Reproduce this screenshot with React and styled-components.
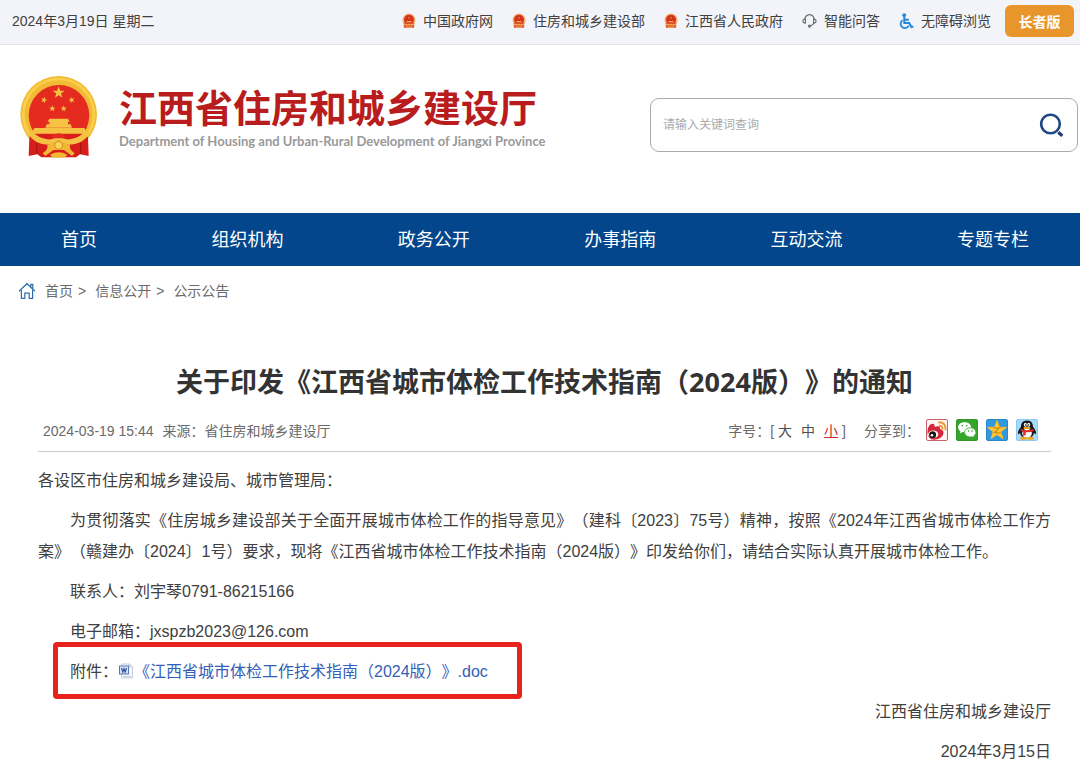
import React from "react";
import styled, { createGlobalStyle, ThemeProvider } from "styled-components";

const theme = {
  font: '"Liberation Sans", "Noto Sans CJK SC", sans-serif',
  colors: {
    blue: "#03468c",
    red: "#b81c1d",
    orange: "#e8962c",
    link: "#3460b8",
    mark: "#e8231d",
  },
  text: {
    primary: "#404040",
    muted: "#6a6a6a",
  },
};

const GlobalStyle = createGlobalStyle`
  * {
    box-sizing: border-box;
  }

  body {
    margin: 0;
    background: #fff;
    color: ${theme.text.primary};
    font-family: ${theme.font};
    text-spacing-trim: space-all; /* keep brackets full width */
  }

  a {
    color: inherit;
    text-decoration: none;
  }

  button,
  input {
    font-family: inherit;
  }
`;

const TopBar = styled.div`
  display: flex;
  align-items: center;
  justify-content: space-between;
  min-height: 45px;
  padding: 0 6px 2px 12px;
  background: #f3f4f9;
  border-bottom: 1px solid #e2e3e6;
  font-size: 14px;
  line-height: 20px;
`;

const TopLinks = styled.div`
  display: flex;
  align-items: center;
  gap: 19px;
`;

const TopLink = styled.a`
  display: flex;
  align-items: center;
  gap: 7px;
`;

const ElderButton = styled.button`
  width: 69px;
  height: 32px;
  margin-left: -5px;
  padding: 0;
  border: 0;
  border-radius: 6px;
  background: ${({ theme }) => theme.colors.orange};
  color: #fff;
  font-size: 14px;
  font-weight: 700;
`;

const Header = styled.header`
  display: flex;
  align-items: center;
  justify-content: space-between;
  padding: 31px 2px 55px 20px;
`;

const Brand = styled.a`
  display: flex;
  align-items: center;
  gap: 21px;
`;

const BrandName = styled.h1`
  margin: 0;
  color: ${({ theme }) => theme.colors.red};
  font-size: 38px;
  font-weight: 700;
  line-height: 48px;
`;

const BrandEnglish = styled.p`
  margin: 0;
  color: #999;
  font-family: Lato, sans-serif;
  font-size: 13px;
  font-weight: 700;
  line-height: 16px;
`;

const SearchForm = styled.form`
  display: flex;
  align-items: center;
  width: 428px;
  height: 54px;
  margin-top: 16px;
  padding: 0 12px;
  border: 1px solid #aaa;
  border-radius: 9px;
`;

const SearchInput = styled.input`
  flex: 1;
  min-width: 0;
  padding: 0;
  border: 0;
  outline: 0;
  background: none;
  font-size: 12px;

  &::placeholder {
    color: #aaa;
  }
`;

const IconButton = styled.button`
  display: flex;
  padding: 0;
  border: 0;
  background: none;
`;

const Nav = styled.nav`
  display: flex;
  align-items: center;
  justify-content: space-between;
  padding: 2px 51px 0 61px;
  background: ${({ theme }) => theme.colors.blue};
  color: #fff;
  font-size: 18px;
  line-height: 51px;
`;

const Crumbs = styled.nav`
  display: flex;
  align-items: center;
  gap: 9px;
  height: 50px;
  padding: 0 18px;
  color: ${({ theme }) => theme.text.muted};
  font-size: 14px;
  line-height: 20px;
`;

const Crumb = styled.span`
  display: flex;
  align-items: baseline;
  gap: 5px;
`;

const Article = styled.article`
  padding: 48px 29px 0 38px;
`;

const ArticleTitle = styled.h2`
  margin: 0;
  color: #333;
  font-family: "Noto Sans", "Noto Sans CJK SC", sans-serif;
  font-size: 27px;
  line-height: 36px;
  text-align: center;
`;

const Meta = styled.div`
  display: flex;
  align-items: center;
  justify-content: space-between;
  height: 52px;
  padding: 8px 13px 0 5px;
  border-bottom: 1px solid #ccc;
  color: ${({ theme }) => theme.text.muted};
  font-size: 14px;
`;

const MetaGroup = styled.div`
  display: flex;
  align-items: baseline;
  gap: ${({ $gap }) => $gap || "9px"};
`;

const SizeButton = styled.button`
  padding: 0;
  border: 0;
  background: none;
  color: ${({ $active }) => ($active ? "#d0262b" : "#505050")};
  font-size: 14px;
  text-decoration: ${({ $active }) => ($active ? "underline" : "none")};
`;

const Tools = styled.div`
  display: flex;
  align-items: center;
  gap: 18px;
`;

const Share = styled.div`
  display: flex;
  align-items: center;
  gap: 6px;
`;

const ShareLink = styled.a`
  display: flex;
`;

const ShareList = styled.div`
  display: flex;
  gap: 8px;
`;

const Content = styled.div`
  display: flex;
  flex-direction: column;
  gap: 9px;
  padding: 13px 0 7px;
  font-size: 16px;
  line-height: 31px;
`;

const Paragraph = styled.p`
  position: relative;
  margin: 0;
  text-indent: ${({ $indent }) => ($indent ? "2em" : "0")};
  text-align: ${({ $align }) => $align || "justify"};
`;

const FileLink = styled.a`
  color: ${({ theme }) => theme.colors.link};
`;

/* Red frame drawn over the attachment line */
const Highlight = styled.span`
  position: absolute;
  top: -14px;
  left: 15px;
  width: 469px;
  height: 57px;
  border: 5px solid ${({ theme }) => theme.colors.mark};
  border-radius: 4px;
  pointer-events: none;
`;

const STAR = "M0-10 2.4-3.2 9.5-3.1 3.8 1.2 5.9 8.1 0 4-5.9 8.1-3.8 1.2-9.5-3.1-2.4-3.2Z";

function Emblem() {
  return (
    <svg width="78" height="82" viewBox="0 0 234 246" aria-hidden="true">
      <circle cx="116" cy="115" r="115" fill="#f3bb35" />
      <circle cx="116" cy="115" r="106" fill="none" stroke="#f9cf4b" strokeWidth="8" />
      <circle cx="117" cy="118" r="91" fill="#e52a20" />
      <g fill="#f6c244">
        <path d={STAR} transform="translate(116 50) scale(1.9)" />
        <path d={STAR} transform="translate(72 72) rotate(18)" />
        <path d={STAR} transform="translate(155 72) rotate(-18)" />
        <path d={STAR} transform="translate(97 98)" />
        <path d={STAR} transform="translate(131 98)" />
        <path d="M88 128h56l5 9h-5v8h8l4 10H76l4-10h8v-8h-5Z" />
        <path d="M43 156h150l9 17H34Z" />
      </g>
      <path d="M34 174q-4 4-6 10l-2 56 26-5 12 9h104l12-9 26 5-2-56-10-10Z" fill="#d91d1b" />
      <path d="M22 172q22 34 62 34 20 0 32-14 12 14 32 14 40 0 62-34l-14-6q-18 20-46 24-22 2-34-12-12 14-34 12-28-4-46-24Z" fill="#f5c343" />
      <path d="M94 180q22-16 44 0l-8 7h-28Z" fill="#e52a20" />
      <path d="M82 206q4 14-14 26l8 8 24-18h32l24 18 8-8q-18-12-14-26l-20-4-14-10-14 10Z" fill="#f3b735" />
      <circle cx="116" cy="208" r="12" fill="#f9d45b" stroke="#d88a20" strokeWidth="3" />
      <path d="M90 236q26-14 52 0l-8 9H98Z" fill="#f3b735" />
      <path d="M50 200v34M182 200v34" stroke="#a91415" strokeWidth="4" />
    </svg>
  );
}

function SmallEmblem() {
  return (
    <svg width="14" height="16" viewBox="0 0 14 16" aria-hidden="true">
      <circle cx="7" cy="7" r="6.5" fill="#f4b172" />
      <circle cx="7" cy="6.8" r="5" fill="#d4341f" />
      <path d="M1.600 9.800h10.800l-.4 5H2Z" fill="#de5228" />
      <path d="M2 10.400q2.500 1.600 5 .4 2.500 1.200 5-.4v1.400q-2.500 1.200-5 .2-2.500 1-5-.2Z" fill="#f6b35a" />
      <path d="M4.500 8h5v1.300h-5ZM4 13.500h6v1H4ZM6.500 4h1v1.500h-1Z" fill="#f3a550" />
    </svg>
  );
}

function HeadsetIcon() {
  return (
    <svg width="15" height="16" viewBox="0 0 16 16" fill="none" stroke="#666" strokeWidth="1.200" strokeLinecap="round" aria-hidden="true">
      <path d="M3 6.200a5 5 0 0 1 10 0" />
      <path d="M3.600 5.800h-1Q1 6.200 1 8t1.600 2.200h1ZM12.400 5.800h1Q15 6.200 15 8t-1.600 2.200h-1Z" />
      <path d="M12.600 10.200q-.8 2.400-3.600 3" />
      <circle cx="8" cy="13.400" r="1.100" />
    </svg>
  );
}

function WheelchairIcon() {
  return (
    <svg width="15" height="17" viewBox="0 0 15 17" fill="none" stroke="#2387dc" aria-hidden="true">
      <circle cx="5.200" cy="2.200" r="1.900" fill="#2387dc" stroke="none" />
      <path d="M5.300 4v6h5l2.200 4.200 1.800-.9M5.500 6.800h4.300" strokeWidth="2" />
      <path d="M3.600 7.200a4.300 4.300 0 1 0 6.300 5.300" strokeWidth="1.800" />
    </svg>
  );
}

function SearchIcon() {
  return (
    <svg width="26" height="26" viewBox="0 0 26 26" fill="none" stroke="#1c3f75" aria-hidden="true">
      <circle cx="11.500" cy="12" r="9.300" stroke="#1d4a86" strokeWidth="2.600" />
      <path d="M19.300 20.300l4 3.600" strokeWidth="3.200" />
    </svg>
  );
}

function HomeIcon() {
  return (
    <svg width="18" height="18" viewBox="0 0 18 18" fill="none" stroke="#2f6ea8" strokeWidth="1.200" aria-hidden="true">
      <path d="M1 9.300 9 1.700l8 7.600M12.800 5V2.400h2v4.500" />
      <path d="M3.400 8v8.400h3.400v-5.200h4.400v5.200h3.400V8" />
    </svg>
  );
}

function WeiboIcon() {
  return (
    <svg width="22" height="22" viewBox="0 0 22 22" aria-hidden="true">
      <rect x=".5" y=".5" width="21" height="21" rx="1.500" fill="#fff5f2" stroke="#c6646d" />
      <path d="M1.500 12.500C1.500 8 4.500 4.200 7.200 4.800q1.800.6 1.300 3 5-1.600 5.500.6.200 1-.3 1.700 4 .9 3.800 4C17.200 18.500 12 20.800 8 20.800c-4 0-7-3.800-6.500-8.300Z" fill="#d5273a" />
      <ellipse cx="7.200" cy="15.300" rx="5" ry="3.900" fill="#fff" />
      <circle cx="6.600" cy="15.800" r="3.500" fill="#151313" />
      <circle cx="6" cy="16.300" r="1.300" fill="#fff" />
      <path d="M13 6.800q3.800-.2 3.600 3.800M12.400 3.200q7.600-.4 7.200 8" fill="none" stroke="#eb9837" strokeWidth="1.900" />
    </svg>
  );
}

function WechatIcon() {
  return (
    <svg width="22" height="22" viewBox="0 0 22 22" aria-hidden="true">
      <rect x=".5" y=".5" width="21" height="21" rx="1.500" fill="#35a52c" stroke="#319328" />
      <path d="M8.600 3.300c-3.700 0-6.500 2.200-6.500 5 0 1.700.9 3 2.400 3.900l-.7 2.200 2.700-1.400q1 .3 2.100.3c3.700 0 6.500-2.200 6.500-5s-2.800-5-6.500-5Z" fill="#fff" />
      <path d="M14.200 8.800c-3.200 0-5.600 2-5.600 4.600s2.400 4.600 5.600 4.600q1 0 1.900-.3l2.200 1.300-.6-2.100c1.400-.9 2.200-2.100 2.200-3.500 0-2.600-2.500-4.600-5.700-4.600Z" fill="#fff" stroke="#35a52c" strokeWidth=".8" />
      <path d="M5.600 6.600h1.500M9.900 6.600h1.500M11.800 12h1.300M15.400 12h1.300" stroke="#35a52c" strokeWidth="1.300" />
    </svg>
  );
}

function QzoneIcon() {
  return (
    <svg width="22" height="22" viewBox="0 0 22 22" aria-hidden="true">
      <rect x=".5" y=".5" width="21" height="21" rx="1.500" fill="#3399df" stroke="#2a88c9" />
      <path d={STAR} transform="translate(11 11.500)" fill="#fccb32" stroke="#f9b928" strokeWidth="1" strokeLinejoin="round" />
      <path d="M7.500 8.800h6l-5 4.700q3 .8 6.300.2" fill="none" stroke="#d58b17" strokeWidth="1.300" />
    </svg>
  );
}

function QQIcon() {
  return (
    <svg width="22" height="22" viewBox="0 0 22 22" aria-hidden="true">
      <rect x=".5" y=".5" width="21" height="21" rx="1.500" fill="#a6dafa" stroke="#8cc9f0" />
      <path d="M11 1.500c-4.200 0-6 2.800-6 6.300-1.800 2-3.500 4.800-3 7.300q1 .3 2-1.300.5 5 7 5t7-5q1 1.600 2 1.300c.5-2.500-1.200-5.300-3-7.300 0-3.500-1.800-6.300-6-6.300Z" fill="#17171b" />
      <ellipse cx="11" cy="14.200" rx="4.800" ry="4.500" fill="#fff" />
      <ellipse cx="9.300" cy="5.800" rx="1.500" ry="2" fill="#fff" />
      <ellipse cx="12.700" cy="5.800" rx="1.500" ry="2" fill="#fff" />
      <circle cx="9.600" cy="6" r=".7" fill="#111" />
      <circle cx="12.400" cy="6" r=".7" fill="#111" />
      <ellipse cx="11" cy="8.900" rx="3.600" ry="1.200" fill="#f3a51e" />
      <path d="M4.700 9.700q6.300 3 12.600 0l.5 2.200q-3.900 1.800-8 1.300l-.3 3.200-2.500-.2.300-3.500q-1.600-.3-2.700-1Z" fill="#df2924" />
      <ellipse cx="7.500" cy="19.200" rx="3.400" ry="1.500" fill="#f3a51e" />
      <ellipse cx="14.500" cy="19.200" rx="3.400" ry="1.500" fill="#f3a51e" />
    </svg>
  );
}

const DocSvg = styled.svg`
  vertical-align: -2px;
`;

function DocIcon() {
  return (
    <DocSvg width="16" height="16" viewBox="0 0 16 16" aria-hidden="true">
      <path d="M3.500 1h8l3 3v11h-11Z" fill="#f6f8fc" stroke="#c3cbdb" />
      <path d="M11.500 1v3h3" fill="none" stroke="#c3cbdb" />
      <rect x="1.500" y="3" width="9" height="8" fill="#dfe7f6" stroke="#5674b8" />
      <path d="M3.500 5 4.800 9 6 5.800 7.200 9 8.500 5" fill="none" stroke="#3358aa" strokeWidth="1.300" />
      <path d="M5 13.500h8" stroke="#c3cbdb" />
    </DocSvg>
  );
}

const topLinks = [
  { label: "中国政府网", Icon: SmallEmblem },
  { label: "住房和城乡建设部", Icon: SmallEmblem },
  { label: "江西省人民政府", Icon: SmallEmblem },
  { label: "智能问答", Icon: HeadsetIcon },
  { label: "无障碍浏览", Icon: WheelchairIcon },
];

const navItems = ["首页", "组织机构", "政务公开", "办事指南", "互动交流", "专题专栏"];

const crumbs = ["首页", "信息公开", "公示公告"];

const shares = [
  { label: "新浪微博", Icon: WeiboIcon },
  { label: "微信", Icon: WechatIcon },
  { label: "QQ空间", Icon: QzoneIcon },
  { label: "QQ好友", Icon: QQIcon },
];

export default function App() {
  return (
    <ThemeProvider theme={theme}>
      <GlobalStyle />

      <TopBar>
        <span>2024年3月19日 星期二</span>
        <TopLinks>
          {topLinks.map(({ label, Icon }) => (
            <TopLink href="#" key={label}>
              <Icon />
              {label}
            </TopLink>
          ))}
          <ElderButton type="button">长者版</ElderButton>
        </TopLinks>
      </TopBar>

      <Header>
        <Brand href="#">
          <Emblem />
          <div>
            <BrandName>江西省住房和城乡建设厅</BrandName>
            <BrandEnglish>
              Department of Housing and Urban-Rural Development of Jiangxi Province
            </BrandEnglish>
          </div>
        </Brand>
        <SearchForm onSubmit={(e) => e.preventDefault()}>
          <SearchInput type="text" aria-label="请输入关键词查询" placeholder="请输入关键词查询" />
          <IconButton type="submit" aria-label="搜索">
            <SearchIcon />
          </IconButton>
        </SearchForm>
      </Header>

      <Nav>
        {navItems.map((item) => (
          <a href="#" key={item}>{item}</a>
        ))}
      </Nav>

      <Crumbs>
        <HomeIcon />
        {crumbs.map((item, i) => (
          <Crumb key={item}>
            <a href="#">{item}</a>
            {i < crumbs.length - 1 && <span>&gt;</span>}
          </Crumb>
        ))}
      </Crumbs>

      <Article>
        <ArticleTitle>关于印发《江西省城市体检工作技术指南（2024版）》的通知</ArticleTitle>

        <Meta>
          <MetaGroup>
            <span>2024-03-19 15:44</span>
            <span>来源：省住房和城乡建设厅</span>
          </MetaGroup>
          <Tools>
            <MetaGroup $gap="4px">
              <span>字号：[</span>
              <MetaGroup>
                <SizeButton type="button">大</SizeButton>
                <SizeButton type="button">中</SizeButton>
                <SizeButton type="button" $active>小</SizeButton>
              </MetaGroup>
              <span>]</span>
            </MetaGroup>
            <Share>
              <span>分享到：</span>
              <ShareList>
                {shares.map(({ label, Icon }) => (
                  <ShareLink href="#" aria-label={label} key={label}>
                    <Icon />
                  </ShareLink>
                ))}
              </ShareList>
            </Share>
          </Tools>
        </Meta>

        <Content>
          <Paragraph>各设区市住房和城乡建设局、城市管理局：</Paragraph>
          <Paragraph $indent>
            为贯彻落实《住房城乡建设部关于全面开展城市体检工作的指导意见》（建科〔2023〕75号）精神，按照《2024年江西省城市体检工作方案》（赣建办〔2024〕1号）要求，现将《江西省城市体检工作技术指南（2024版）》印发给你们，请结合实际认真开展城市体检工作。
          </Paragraph>
          <Paragraph $indent>联系人：刘宇琴0791-86215166</Paragraph>
          <Paragraph $indent>电子邮箱：jxspzb2023@126.com</Paragraph>
          <Paragraph $indent>
            附件：
            <FileLink href="#">
              <DocIcon />
              《江西省城市体检工作技术指南（2024版）》.doc
            </FileLink>
            <Highlight />
          </Paragraph>
          <Paragraph $align="right">江西省住房和城乡建设厅</Paragraph>
          <Paragraph $align="right">2024年3月15日</Paragraph>
        </Content>
      </Article>
    </ThemeProvider>
  );
}
